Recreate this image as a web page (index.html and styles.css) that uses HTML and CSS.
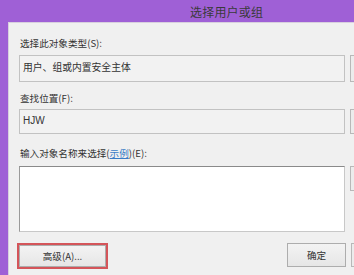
FILE: index.html
```html
<!DOCTYPE html>
<html>
<head>
<meta charset="utf-8">
<link rel="stylesheet" href="styles.css">
</head>
<body>
<div class="window">
  <div class="titlebar">选择用户或组</div>
  <div class="client">
    <div class="row-label l1">选择此对象类型(S):</div>
    <div class="row r1">
      <div class="field f1">用户、组或内置安全主体</div>
      <div class="side-btn sb1"></div>
    </div>
    <div class="row-label l2">查找位置(F):</div>
    <div class="row r2">
      <div class="field f2">HJW</div>
      <div class="side-btn sb2"></div>
    </div>
    <div class="row-label l3">输入对象名称来选择(<span class="link">示例</span>)(E):</div>
    <div class="row r3">
      <div class="textarea"></div>
      <div class="side-btn sb3"></div>
    </div>
    <div class="row bottom">
      <div class="adv-wrap"><div class="btn adv">高级(A)...</div></div>
      <div class="btn ok">确定</div>
      <div class="side-btn sb4"></div>
    </div>
  </div>
</div>
</body>
</html>
```
FILE: styles.css
```css
html, body {
  margin: 0;
  padding: 0;
  width: 354px;
  height: 275px;
  overflow: hidden;
}
body {
  font-family: "Noto Sans CJK SC", "Liberation Sans", sans-serif;
  color: #333;
}
.window {
  width: 354px;
  height: 275px;
  background: #9f60d6;
  display: flex;
  flex-direction: column;
}
.titlebar {
  height: 22px;
  line-height: 24px;
  font-size: 12px;
  color: #3a3a3a;
  padding-left: 190px;
  letter-spacing: 0.2px;
}
.client {
  flex: 1;
  margin-left: 8px;
  background: #f0f0f0;
  border-top: 1px solid #d8d0de;
  border-left: 1px solid #d8d0de;
  padding-left: 10px;
  display: flex;
  flex-direction: column;
  overflow: hidden;
}
.row-label {
  font-size: 9.6px;
  height: 14px;
  line-height: 14px;
  color: #333;
  padding-left: 1px;
}
.l1 { margin-top: 13px; }
.l2 { margin-top: 9px; }
.l3 { margin-top: 12px; }
.link {
  color: #3a7cc6;
  text-decoration: underline;
}
.row {
  display: flex;
  flex-direction: row;
  align-items: flex-start;
}
.row > * { flex: none; }
.r1 { margin-top: 5px; }
.r2 { margin-top: 4px; }
.r3 { margin-top: 6px; }
.field {
  width: 326px;
  box-sizing: border-box;
  border: 1px solid #c2c2c2;
  background: #f2f2f2;
  font-size: 9.8px;
  padding-left: 3px;
  color: #333;
}
.f1 { height: 27px; line-height: 22px; }
.f2 { height: 25px; line-height: 21px; font-family: "Liberation Sans", sans-serif; font-size: 10px; }
.textarea {
  width: 326px;
  height: 66px;
  box-sizing: border-box;
  background: #fff;
  border: 1px solid #c8c8c8;
  border-top: 1px solid #8a8a8a;
  border-left: 1px solid #9a9a9a;
}
.side-btn {
  margin-left: 5px;
  width: 60px;
  box-sizing: border-box;
  border: 1px solid #b8b8b8;
  background: #ececec;
}
.sb1 { height: 27px; }
.sb2 { height: 25px; }
.sb3 { height: 25px; }
.sb4 { height: 24px; margin-left: 5px; }
.bottom {
  margin-top: 11px;
}
.adv-wrap {
  margin-left: -2px;
  border: 2px solid #d4555a;
  box-sizing: border-box;
  width: 91px;
  height: 26px;
}
.btn {
  box-sizing: border-box;
  border: 1px solid #adadad;
  background: linear-gradient(#f3f3f3, #e6e6e6);
  font-size: 9.6px;
  text-align: center;
  color: #333;
}
.adv {
  width: 100%;
  height: 100%;
  line-height: 20px;
}
.ok {
  margin-left: 179px;
  width: 59px;
  height: 24px;
  line-height: 22px;
}
```
